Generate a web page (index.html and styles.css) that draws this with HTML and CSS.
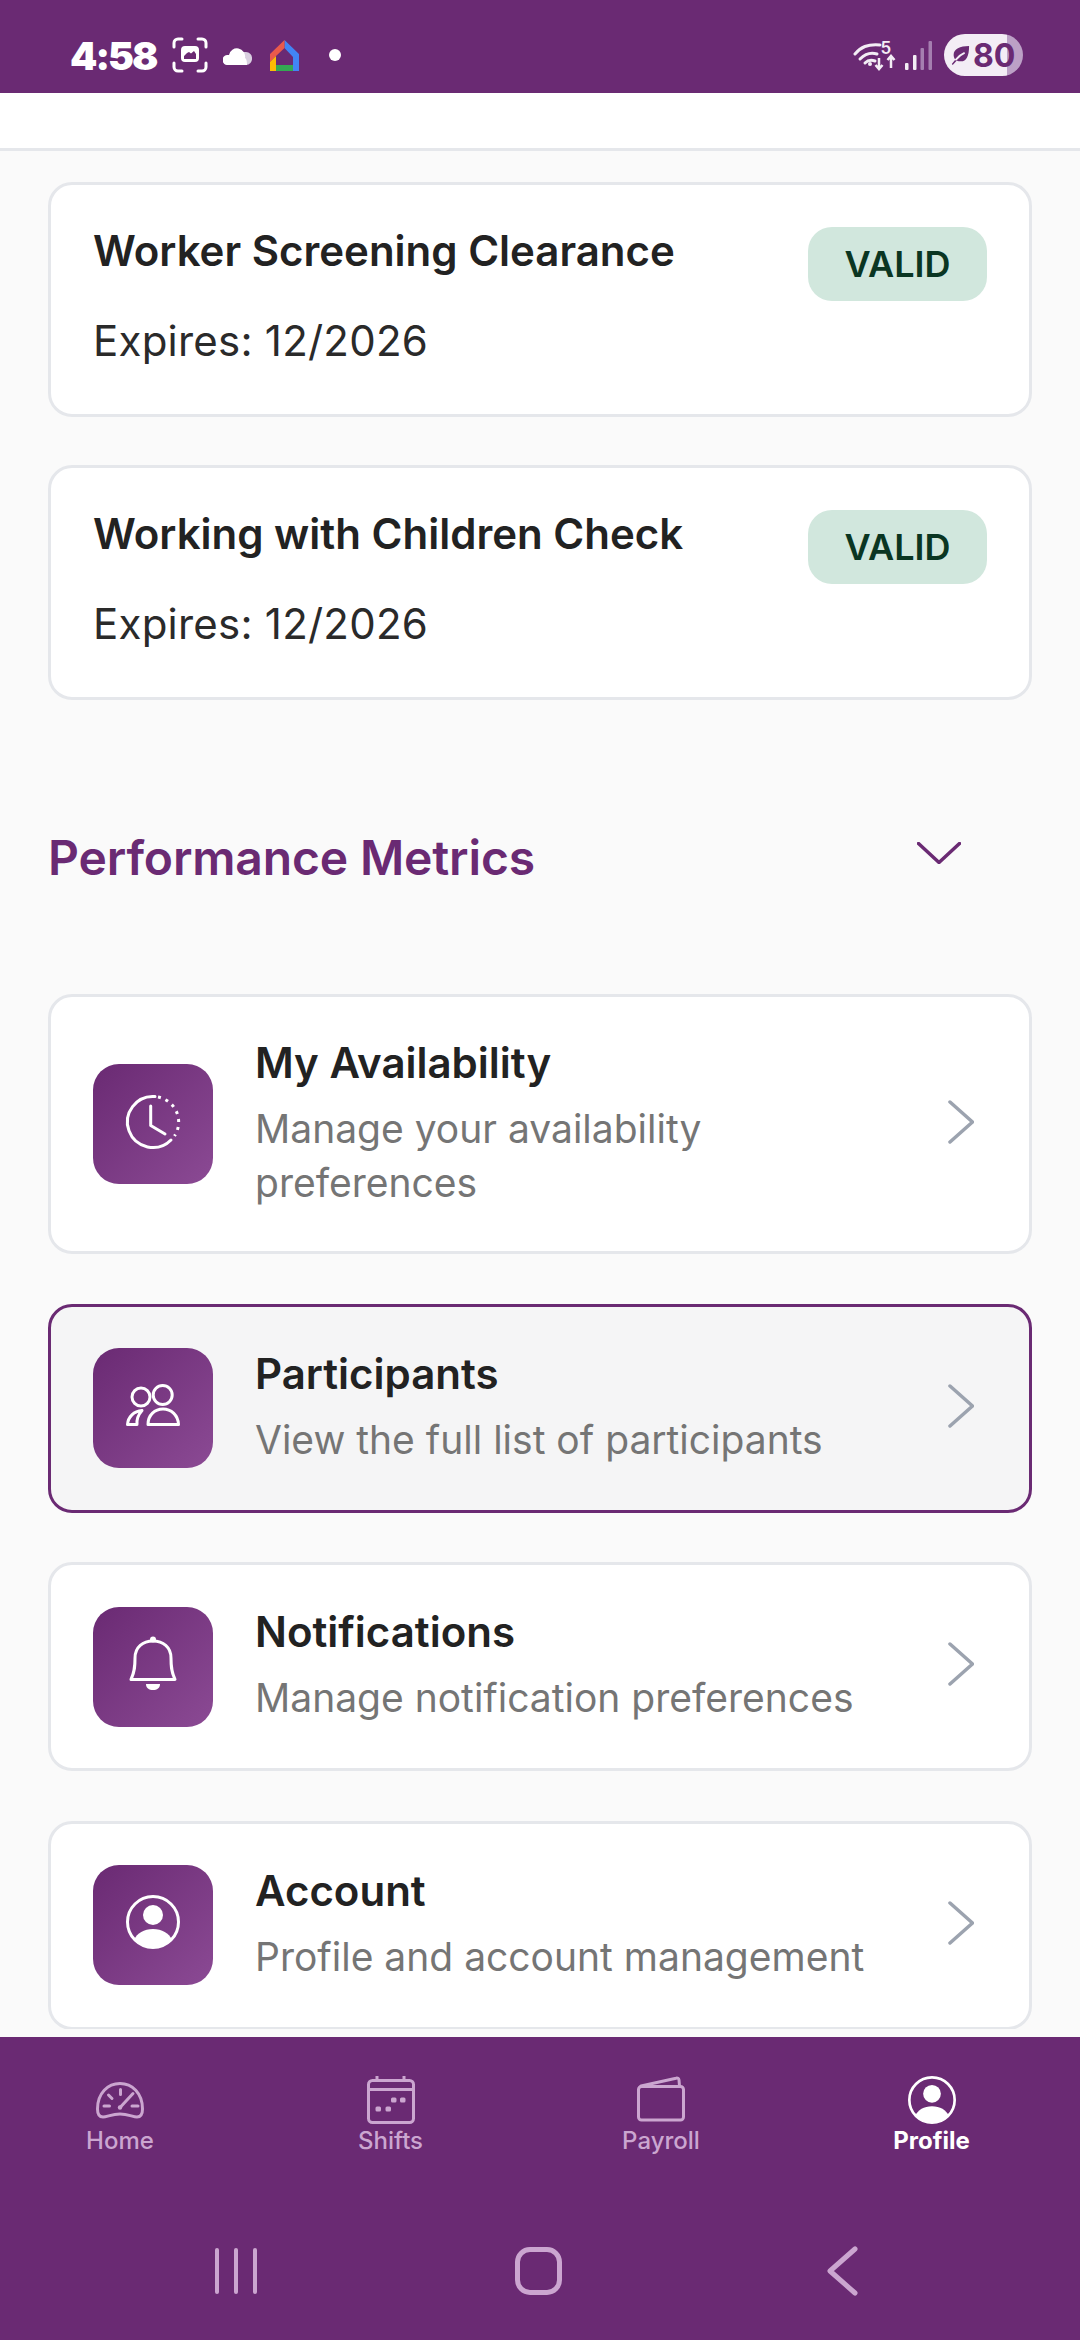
FILE: index.html
```html
<!DOCTYPE html>
<html lang="en">
<head>
<meta charset="utf-8">
<title>Profile</title>
<link rel="stylesheet" href="styles.css">
</head>
<body>
<div class="app">
  <header class="status">
    <span class="time">4:58</span>
    <svg class="st-shot" viewBox="0 0 36 36"><path class="st-line" d="M2 10V6a4 4 0 0 1 4-4h4M26 2h4a4 4 0 0 1 4 4v4M34 26v4a4 4 0 0 1-4 4h-4M10 34H6a4 4 0 0 1-4-4v-4"/><path class="st-fill" fill-rule="evenodd" d="M13 9h10a4 4 0 0 1 4 4v8a4 4 0 0 1-4 4H13a4 4 0 0 1-4-4v-8a4 4 0 0 1 4-4zM12 22h12v-5l-2-3-3 2.500-2-1.500-2 1-3 3z"/></svg>
    <svg class="st-cloud" viewBox="0 0 29 19"><path fill="#d9cfe0" d="M18 6h5a6 6 0 0 1 6 6.500A6 6 0 0 1 23 19H16z"/><path fill="#fff" d="M5 19a5 5 0 0 1-1-10h2a8 8 0 0 1 16 3c2 1 2 5 2 7z"/></svg>
    <svg class="st-ghome" viewBox="0 0 29 31"><path fill="#4285f4" d="M14.500 0 29 14v17h-6V17l-8.500-9z"/><path fill="#ea5a4b" d="M14.500 0 0 14v8l6-6 8.500-8z"/><path fill="#fbbc04" d="M0 22l6-6v15H0z"/><path fill="#34a853" d="M6 25h17v6H6z"/></svg>
    <span class="st-dot"></span>
    <svg class="st-wifi" viewBox="0 0 44 32">
      <g class="st-arc"><path d="M2 15C8 8 14 5 27 6"/><path d="M7 20c5-5 11-7 17-5"/><path d="M12 24c3-3 7-3 10-2"/></g>
      <circle cx="17" cy="25" r="2" fill="#f3edf5"/>
      <text class="st-five" x="27.500" y="15">5</text>
      <path class="st-arrow" d="M26 19v10M22.500 26l3.500 4 3.500-4M38 29V18M34.500 21l3.500-4 3.500 4"/>
    </svg>
    <svg class="st-signal" viewBox="0 0 27 29"><rect x="0" y="22" width="3.500" height="7" rx="1" fill="#f3edf5"/><rect x="8" y="14" width="3.500" height="15" rx="1" fill="#f3edf5"/><rect x="15.500" y="7" width="3.500" height="22" rx="1" fill="#a57fb0"/><rect x="23.500" y="0" width="3.500" height="29" rx="1" fill="#a57fb0"/></svg>
    <span class="battery">
      <svg class="leaf" viewBox="0 0 22 22"><path d="M21 1C11 1 4 4 4 11c0 2 .8 3.800 2 5L2 21l1 1 4.500-5c1.300.8 2.800 1 4.500 1 6 0 9-6 9-17z"/><path class="vein" d="M6.500 16C9 13 12 10.500 15.500 9"/></svg>
      <span>80</span>
    </span>
  </header>

  <div class="topbar"></div>

  <main class="content">
    <section class="cred-list">
      <article class="card cred">
        <div class="cred-text">
          <h3 class="cred-title">Worker Screening Clearance</h3>
          <p class="cred-exp">Expires: 12/2026</p>
        </div>
        <span class="badge">VALID</span>
      </article>
      <article class="card cred">
        <div class="cred-text">
          <h3 class="cred-title">Working with Children Check</h3>
          <p class="cred-exp">Expires: 12/2026</p>
        </div>
        <span class="badge">VALID</span>
      </article>
    </section>

    <div class="section-head">
      <h2 class="section-title">Performance Metrics</h2>
      <svg class="chev-down" viewBox="0 0 44 22"><path d="M1.500 1.500 22 20.500 42.500 1.500"/></svg>
    </div>

    <section class="menu">
      <article class="card row">
        <div class="tile">
          <svg class="tile-ic" viewBox="0 0 72 72"><path class="ln" d="M38 8.600A25.500 25.500 0 1 0 54 52"/><path class="ln dots" d="M41 9A25.500 25.500 0 0 1 57.500 48"/><path class="ln" d="M33.700 18V37.500L48 46"/></svg>
        </div>
        <div class="row-text">
          <h3 class="row-title">My Availability</h3>
          <p class="row-desc">Manage your availability preferences</p>
        </div>
        <svg class="chev" viewBox="0 0 26 44"><path d="M2 2 24.500 22 2 42"/></svg>
      </article>

      <article class="card row active">
        <div class="tile">
          <svg class="tile-ic" viewBox="0 0 72 72"><circle class="ln" cx="24" cy="25" r="9"/><circle class="ln" cx="45.700" cy="23" r="9.500"/><path class="ln" d="M31 52.500C31 43 38 37 46 37s15 6 15.500 15.500z"/><path class="ln" d="M10.500 52.500C11 45 17 39 25 38.500 21 43 19.500 47 20 52.500z"/></svg>
        </div>
        <div class="row-text">
          <h3 class="row-title">Participants</h3>
          <p class="row-desc">View the full list of participants</p>
        </div>
        <svg class="chev" viewBox="0 0 26 44"><path d="M2 2 24.500 22 2 42"/></svg>
      </article>

      <article class="card row">
        <div class="tile">
          <svg class="tile-ic" viewBox="0 0 72 72"><circle cx="36" cy="8.500" r="3" fill="#fff"/><path class="ln" d="M14 48.500C18 40 18 34 18 27 18 16 26 10 36 10s18 6 18 17c0 7 0 13 4 21.500z"/><path fill="#fff" d="M29 53h14c0 4-3 6-7 6s-7-2-7-6z"/></svg>
        </div>
        <div class="row-text">
          <h3 class="row-title">Notifications</h3>
          <p class="row-desc">Manage notification preferences</p>
        </div>
        <svg class="chev" viewBox="0 0 26 44"><path d="M2 2 24.500 22 2 42"/></svg>
      </article>

      <article class="card row">
        <div class="tile">
          <svg class="tile-ic" viewBox="0 0 72 72"><circle class="ln" cx="36" cy="33" r="25.500"/><circle cx="36" cy="26" r="10" fill="#fff"/><path fill="#fff" d="M17 51c3-7 10-11 19-11s16 4 19 11c-5 5-12 8-19 8s-14-3-19-8z"/></svg>
        </div>
        <div class="row-text">
          <h3 class="row-title">Account</h3>
          <p class="row-desc">Profile and account management</p>
        </div>
        <svg class="chev" viewBox="0 0 26 44"><path d="M2 2 24.500 22 2 42"/></svg>
      </article>
    </section>
  </main>

  <footer class="bottom">
    <nav class="tabs">
      <div class="tab">
        <svg class="tab-ic" viewBox="0 0 48 48"><path class="tl" d="M7 41C3.500 41 1.500 38 1.500 33 1.500 17 12 7.500 24 7.500S46.500 17 46.500 33c0 5-2 8-5.500 8-4 0-9-3-17-3s-13 3-17 3z"/><path class="tl" d="M24.500 13.500v5M12.500 19l3.500 3.500M8 30h5.500M36 30h6"/><path class="tl" d="M24.500 31 37 17.500"/><circle cx="24" cy="31.500" r="2.200" fill="#cba6d0"/></svg>
        <span class="tab-label">Home</span>
      </div>
      <div class="tab">
        <svg class="tab-ic" viewBox="0 0 48 48"><rect class="tl" x="1.500" y="4.500" width="45" height="42" rx="4"/><path class="tl" d="M1.500 13.500h45M10 0v4M37 0v4"/><g fill="#cba6d0"><rect x="24" y="21.500" width="5.500" height="5" rx="1.500"/><rect x="33" y="21.500" width="5.500" height="5" rx="1.500"/><rect x="8.500" y="30.500" width="5.500" height="5" rx="1.500"/><rect x="18.500" y="30.500" width="5.500" height="5" rx="1.500"/></g></svg>
        <span class="tab-label">Shifts</span>
      </div>
      <div class="tab">
        <svg class="tab-ic" viewBox="0 0 48 48"><rect class="tl" x="1.500" y="10.500" width="45" height="33.500" rx="3"/><path class="tl" d="M4 10 39 2.200Q41.500 1.500 42 4L42.500 10"/></svg>
        <span class="tab-label">Payroll</span>
      </div>
      <div class="tab on">
        <svg class="tab-ic" viewBox="9 6 54 54"><circle class="ln" cx="36" cy="33" r="25.500"/><circle cx="36" cy="26" r="10" fill="#fff"/><path fill="#fff" d="M17 51c3-7 10-11 19-11s16 4 19 11c-5 5-12 8-19 8s-14-3-19-8z"/></svg>
        <span class="tab-label">Profile</span>
      </div>
    </nav>
    <div class="sysnav">
      <div class="sys-recents"><span></span><span></span><span></span></div>
      <div class="sys-home"></div>
      <svg class="sys-back" viewBox="0 0 32 50"><path d="M29 3 4 25 29 47"/></svg>
    </div>
  </footer>
</div>
</body>
</html>
```

FILE: styles.css
```css
* { box-sizing: border-box; margin: 0; padding: 0; }
html, body { width: 1080px; height: 2340px; overflow: hidden; }
body { font-family: "Inter", "Liberation Sans", sans-serif; background: #fafafa; color: #222; }
svg { display: block; flex: none; }

.app { display: flex; flex-direction: column; height: 2340px; }

.status { display: flex; align-items: center; height: 93px; padding: 17px 57px 0 70px; background: #6a2a73; flex: none; }
.time { font-size: 39px; font-weight: 900; color: #fff; width: 83px; white-space: nowrap; margin-right: 19px; letter-spacing: -2px; }
.st-shot { width: 36px; height: 36px; margin-right: 15px; }
.st-line { fill: none; stroke: #fff; stroke-width: 3; stroke-linecap: round; }
.st-fill { fill: #fff; }
.st-cloud { width: 29px; height: 19px; margin-right: 18px; }
.st-ghome { width: 29px; height: 31px; margin-right: 30px; }
.st-dot { width: 12px; height: 12px; border-radius: 50%; background: #fff; }
.st-wifi { width: 44px; height: 32px; margin-left: auto; margin-right: 8px; }
.st-arc path { fill: none; stroke: #f3edf5; stroke-width: 3; stroke-linecap: round; }
.st-five { font-family: "Inter", sans-serif; font-size: 17px; font-weight: 600; fill: #f3edf5; }
.st-arrow { fill: none; stroke: #f3edf5; stroke-width: 2.500; }
.st-signal { width: 27px; height: 29px; margin-right: 12px; }
.battery { display: flex; align-items: center; gap: 3px; width: 79px; height: 42px; padding-left: 6px; border-radius: 21px; background: linear-gradient(90deg, #f3edf5 80%, #bca0c6 80%); color: #6a2a73; font-size: 32px; font-weight: 700; }
.leaf { width: 20px; height: 20px; fill: #6a2a73; }
.vein { fill: none; stroke: #f3edf5; stroke-width: 2; stroke-linecap: round; }

.topbar { height: 58px; flex: none; background: #fff; border-bottom: 3px solid #e5e7eb; }

.content { flex: 1; min-height: 0; overflow: hidden; padding: 31px 48px 0; }

.card { background: #fff; border: 3px solid #e5e7eb; border-radius: 24px; }
.cred-list { display: flex; flex-direction: column; gap: 48px; }
.cred { display: flex; align-items: flex-start; justify-content: space-between; height: 235px; padding: 42px; }
.cred-title { font-size: 42px; line-height: 48px; font-weight: 600; color: #222; }
.cred-exp { font-size: 42px; line-height: 48px; letter-spacing: 0.230px; color: #2a2a2a; margin-top: 42px; }
.badge { display: flex; align-items: center; justify-content: center; width: 179px; height: 74px; border-radius: 24px; background: #d1e7dd; color: #0a3622; font-size: 36px; font-weight: 600; }

.section-head { display: flex; align-items: center; justify-content: space-between; margin: 126px 0 104px; height: 64px; padding-right: 71px; }
.section-title { font-size: 48px; font-weight: 600; letter-spacing: -0.15px; color: #6a2a73; line-height: 64px; }
.chev-down { width: 44px; height: 22px; margin-bottom: 10px; fill: none; stroke: #6a2a73; stroke-width: 3.500; stroke-linecap: round; stroke-linejoin: round; }

.menu { display: flex; flex-direction: column; gap: 49.5px; }
.row { display: flex; align-items: center; padding: 41.500px 42px; }
.row.active { background: #f5f5f6; border-color: #6a2a73; }
.tile { display: flex; align-items: center; justify-content: center; width: 120px; height: 120px; flex: none; border-radius: 26px; background: linear-gradient(135deg, #6a2a73, #8b4a94); margin-right: 42px; }
.tile-ic { width: 72px; height: 72px; }
.ln { fill: none; stroke: #fff; stroke-width: 3; stroke-linecap: round; stroke-linejoin: round; }
.dots { stroke-linecap: butt; stroke-dasharray: 3 5; }
.row-text { flex: 1; min-width: 0; padding-right: 24px; }
.row-title { font-size: 42px; line-height: 47px; font-weight: 600; color: #222; margin-bottom: 16px; }
.row-desc { font-size: 39px; line-height: 54px; color: #757575; }
.chev { width: 26px; height: 44px; margin: 0 13px 5px 0; fill: none; stroke: #9ca3af; stroke-width: 3.500; stroke-linecap: round; stroke-linejoin: round; }

.bottom { flex: none; height: 303px; margin-top: 8px; background: #6a2a73; }
.tabs { display: grid; grid-template-columns: repeat(4, 240px); column-gap: 30.500px; padding: 39px 0 0 0; height: 190px; }
.tab { display: flex; flex-direction: column; align-items: center; gap: 2px; color: #cba6d0; }
.tab-ic { width: 48px; height: 48px; }
.tl { fill: none; stroke: #cba6d0; stroke-width: 3; stroke-linecap: round; stroke-linejoin: round; }
.tab-label { font-size: 24px; line-height: 30px; font-weight: 500; }
.tab.on { color: #fff; }
.tab.on .tab-label { font-weight: 700; }

.sysnav { display: flex; align-items: center; height: 48px; margin-top: 20px; padding-left: 215px; }
.sys-recents { display: flex; gap: 15px; width: 42px; margin-right: 258px; }
.sys-recents span { width: 4px; height: 46px; border-radius: 2px; background: #cba6d0; }
.sys-home { width: 47px; height: 48px; border: 5px solid #cba6d0; border-radius: 15px; margin-right: 264px; }
.sys-back { width: 32px; height: 50px; fill: none; stroke: #cba6d0; stroke-width: 5; stroke-linecap: round; stroke-linejoin: round; }
```
